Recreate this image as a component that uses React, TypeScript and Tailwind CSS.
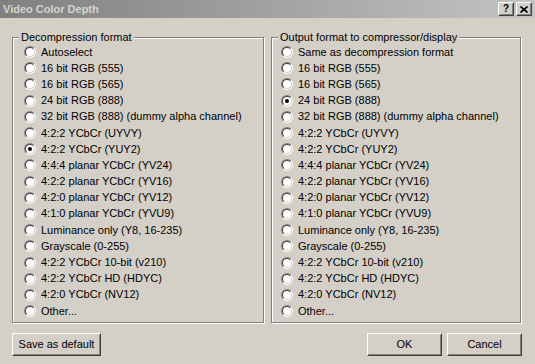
import React from "react";

const leftItems = [
  "Autoselect",
  "16 bit RGB (555)",
  "16 bit RGB (565)",
  "24 bit RGB (888)",
  "32 bit RGB (888) (dummy alpha channel)",
  "4:2:2 YCbCr (UYVY)",
  "4:2:2 YCbCr (YUY2)",
  "4:4:4 planar YCbCr (YV24)",
  "4:2:2 planar YCbCr (YV16)",
  "4:2:0 planar YCbCr (YV12)",
  "4:1:0 planar YCbCr (YVU9)",
  "Luminance only (Y8, 16-235)",
  "Grayscale (0-255)",
  "4:2:2 YCbCr 10-bit (v210)",
  "4:2:2 YCbCr HD (HDYC)",
  "4:2:0 YCbCr (NV12)",
  "Other...",
];

const rightItems = ["Same as decompression format", ...leftItems.slice(1)];

function Radio({ checked }: { checked: boolean }) {
  return (
    <span className="flex h-[12px] w-[12px] shrink-0 rounded-full border border-t-[#808080] border-l-[#808080] border-b-white border-r-white">
      <span className="flex flex-1 items-center justify-center rounded-full border border-t-[#404040] border-l-[#404040] border-b-[#d4d0c8] border-r-[#d4d0c8] bg-white">
        {checked && <span className="h-[4px] w-[4px] rounded-full bg-black" />}
      </span>
    </span>
  );
}

function Group({
  title,
  items,
  selected,
  padLeft,
}: {
  title: string;
  items: string[];
  selected: number;
  padLeft: string;
}) {
  return (
    <div className="relative border border-[#808080] shadow-[inset_1px_1px_0_#ffffff,1px_1px_0_#ffffff]">
      <span className="absolute -top-[7px] left-[6px] bg-[#d4d0c8] px-[2px] text-[11px] leading-[13px]">
        {title}
      </span>
      <div className={`flex flex-col pt-[6px] pb-[3px] ${padLeft}`}>
        {items.map((t, i) => (
          <div key={t} className="flex h-[16.2px] items-center gap-[5px] whitespace-nowrap">
            <Radio checked={i === selected} />
            <span className="text-[11px] leading-[13px]">{t}</span>
          </div>
        ))}
      </div>
    </div>
  );
}

function Button({ children, w }: { children: React.ReactNode; w: string }) {
  return (
    <div
      className={`${w} h-[23px] border border-t-white border-l-white border-b-[#404040] border-r-[#404040] bg-[#d4d0c8]`}
    >
      <div className="flex h-full items-center justify-center border border-t-[#d4d0c8] border-l-[#d4d0c8] border-b-[#808080] border-r-[#808080] text-[11px]">
        {children}
      </div>
    </div>
  );
}

function CaptionButton({ children }: { children: React.ReactNode }) {
  return (
    <div className="h-[14px] w-[16px] border border-t-white border-l-white border-b-[#404040] border-r-[#404040] bg-[#d4d0c8]">
      <div className="flex h-full items-center justify-center border border-t-[#d4d0c8] border-l-[#d4d0c8] border-b-[#808080] border-r-[#808080]">
        {children}
      </div>
    </div>
  );
}

export default function App() {
  return (
    <div
      className="flex h-[364px] w-[535px] flex-col overflow-hidden bg-[#d4d0c8] text-black"
      style={{ fontFamily: '"Liberation Sans", Arial, sans-serif' }}
    >
      <div className="flex h-[18px] items-center justify-between bg-gradient-to-r from-[#808080] to-[#c4c4c4] pl-[3px] pr-[3px]">
        <span className="text-[11px] font-bold text-[#d8d4cc]">Video Color Depth</span>
        <div className="flex gap-[2px]">
          <CaptionButton>
            <span className="text-[10px] font-bold leading-none">?</span>
          </CaptionButton>
          <CaptionButton>
            <svg width="8" height="7" viewBox="0 0 8 7">
              <path d="M0.5 0.5 L7.5 6.5 M7.5 0.5 L0.5 6.5" stroke="#000" strokeWidth="1.6" />
            </svg>
          </CaptionButton>
        </div>
      </div>
      <div className="grid grid-cols-[252px_250px] gap-[7px] pl-[12px] pt-[19px]">
        <Group title="Decompression format" items={leftItems} selected={6} padLeft="pl-[11px]" />
        <Group title="Output format to compressor/display" items={rightItems} selected={3} padLeft="pl-[9px]" />
      </div>
      <div className="mt-[10px] flex items-start justify-between pl-[12px] pr-[13px]">
        <Button w="w-[89px]">Save as default</Button>
        <div className="flex gap-[5px]">
          <Button w="w-[75px]">OK</Button>
          <Button w="w-[75px]">Cancel</Button>
        </div>
      </div>
    </div>
  );
}
